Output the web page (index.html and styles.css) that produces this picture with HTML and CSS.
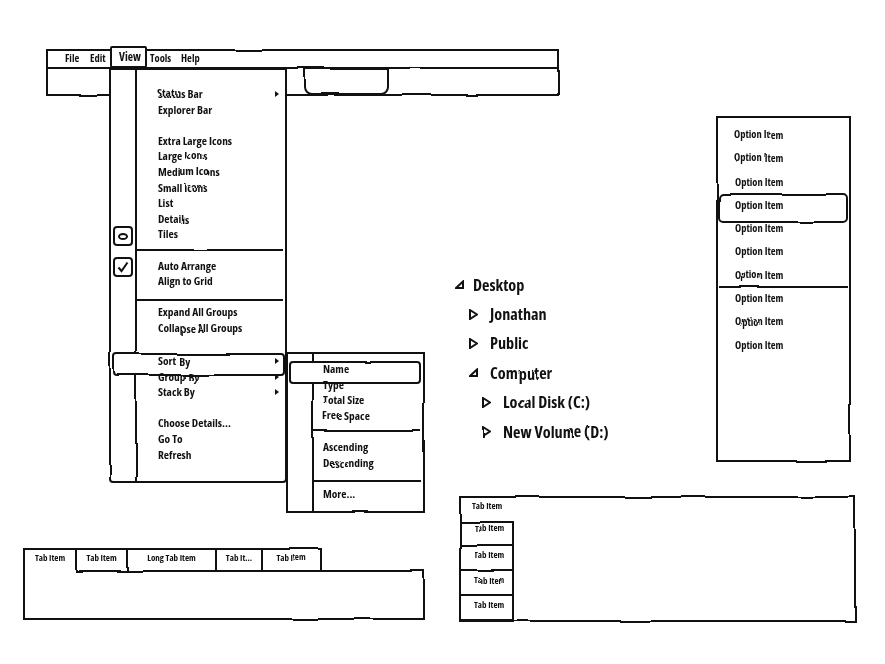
FILE: index.html
```html
<!DOCTYPE html>
<html lang="en">
<head>
    <meta charset="UTF-8">
    <title>wireframe sheet</title>
    <link rel="stylesheet" href="styles.css">
</head>
<body>
    <svg class="defs" width="0" height="0">
        <filter id="rough" x="0" y="0" width="100%" height="100%" color-interpolation-filters="sRGB">
            <feTurbulence type="fractalNoise" baseFrequency="0.018" numOctaves="1" seed="4" result="noise"/>
            <feDisplacementMap in="SourceGraphic" in2="noise" scale="3"/>
            <feGaussianBlur stdDeviation="0.4"/>
        </filter>
    </svg>

    <div class="sheet">
        <!-- window with menu -->
        <div class="window">
            <div class="menubar">
                <span class="bar-item file">File</span>
                <span class="bar-item edit">Edit</span>
                <span class="bar-item view">View</span>
                <span class="bar-item tools">Tools</span>
                <span class="bar-item help">Help</span>
            </div>
            <div class="toolbar">
                <div class="tool-button"></div>
            </div>

            <div class="menu">
                <div class="row arrow">Status Bar</div>
                <div class="row">Explorer Bar</div>
                <div class="row"></div>
                <div class="row">Extra Large Icons</div>
                <div class="row">Large Icons</div>
                <div class="row">Medium Icons</div>
                <div class="row">Small Icons</div>
                <div class="row">List</div>
                <div class="row">Details</div>
                <div class="row">
                    <span class="mark"><span class="dot"></span></span>
                    Tiles
                </div>
                <div class="sep"></div>
                <div class="row">
                    <span class="mark mark-check">
                        <svg width="12" height="12" viewBox="0 0 12 12"><path d="M1.5 6.5 L4.5 10 L10.5 1.5" fill="none" stroke="#111" stroke-width="2"/></svg>
                    </span>
                    Auto Arrange
                </div>
                <div class="row">Align to Grid</div>
                <div class="sep low"></div>
                <div class="row">Expand All Groups</div>
                <div class="row">Collapse All Groups</div>
                <div class="row tall"></div>
                <div class="row arrow current"><span class="label">Sort By</span></div>
                <div class="row arrow">Group By</div>
                <div class="row arrow">Stack By</div>
                <div class="row"></div>
                <div class="row">Choose Details...</div>
                <div class="row">Go To</div>
                <div class="row">Refresh</div>

                <div class="submenu">
                    <div class="row current"><span class="label">Name</span></div>
                    <div class="row">Type</div>
                    <div class="row">Total Size</div>
                    <div class="row">Free Space</div>
                    <div class="sep"></div>
                    <div class="row">Ascending</div>
                    <div class="row">Descending</div>
                    <div class="sep low"></div>
                    <div class="row">More...</div>
                </div>
            </div>
        </div>

        <!-- tree -->
        <div class="tree">
            <div class="node"><svg class="tw" width="9" height="9" viewBox="0 0 9 9"><path d="M1 8 L8 1.5 V8 Z"/></svg>Desktop</div>
            <div class="node lvl1"><svg class="tw" width="9" height="11" viewBox="0 0 9 11"><path d="M1 1 L8 5.5 L1 10 Z"/></svg>Jonathan</div>
            <div class="node lvl1"><svg class="tw" width="9" height="11" viewBox="0 0 9 11"><path d="M1 1 L8 5.5 L1 10 Z"/></svg>Public</div>
            <div class="node lvl1"><svg class="tw" width="9" height="9" viewBox="0 0 9 9"><path d="M1 8 L8 1.5 V8 Z"/></svg>Computer</div>
            <div class="node lvl2"><svg class="tw" width="9" height="11" viewBox="0 0 9 11"><path d="M1 1 L8 5.5 L1 10 Z"/></svg>Local Disk (C:)</div>
            <div class="node lvl2"><svg class="tw" width="9" height="11" viewBox="0 0 9 11"><path d="M1 1 L8 5.5 L1 10 Z"/></svg>New Volume (D:)</div>
        </div>

        <!-- list box -->
        <div class="listbox">
            <div class="option">Option Item</div>
            <div class="option">Option Item</div>
            <div class="option">Option Item</div>
            <div class="option picked">Option Item</div>
            <div class="option">Option Item</div>
            <div class="option">Option Item</div>
            <div class="option">Option Item</div>
            <div class="option ruled">Option Item</div>
            <div class="option">Option Item</div>
            <div class="option">Option Item</div>
        </div>

        <!-- horizontal tabs -->
        <div class="tabs">
            <div class="tab-strip">
                <div class="tab active w52">Tab Item</div>
                <div class="tab w51">Tab Item</div>
                <div class="tab w89">Long Tab Item</div>
                <div class="tab w46">Tab It...</div>
                <div class="tab w61">Tab Item</div>
            </div>
            <div class="tab-panel"></div>
        </div>

        <!-- vertical tabs -->
        <div class="vtabs">
            <div class="vtab first">Tab Item</div>
            <div class="vtab second">Tab Item</div>
            <div class="vtab">Tab Item</div>
            <div class="vtab">Tab Item</div>
            <div class="vtab">Tab Item</div>
        </div>
    </div>
</body>
</html>
```

FILE: styles.css
```css
*{
    box-sizing: border-box;
}
body{
    margin: 0;
    background: #fff;
    overflow: hidden;
}
.defs{
    position: absolute;
}
.sheet{
    position: relative;
    width: 885px;
    height: 664px;
    background: #fff;
    color: #111;
    font-family: "Open Sans", "Open Sans Condensed", "Liberation Sans", sans-serif;
    font-stretch: 75%;
    font-weight: bold;
    font-size: 11.4px;
    filter: url(#rough);
}

/* window + menu */
.window{
    position: absolute;
    left: 46px;
    top: 49px;
    width: 513px;
}
.menubar{
    display: flex;
    align-items: center;
    height: 20px;
    border: 2px solid #111;
    font-size: 10.5px;
    padding: 0 0 3px 17px;
}
.file{
    width: 25px;
}
.edit{
    width: 20px;
}
.view{
    width: 37px;
    height: 22px;
    margin-top: -1px;
    padding: 1px 0 0 7px;
    border: 2px solid #111;
    border-radius: 2px;
    background: #fff;
    font-size: 11.5px;
    position: relative;
    z-index: 2;
}
.tools{
    width: 31px;
    margin-left: 3px;
}
.toolbar{
    height: 28px;
    margin-top: -1px;
    border: 2px solid #111;
    border-top: 0;
    padding-left: 256px;
}
.tool-button{
    width: 85px;
    height: 27px;
    border: 2px solid #111;
    border-radius: 0 0 8px 8px;
}
.menu{
    position: absolute;
    left: 63px;
    top: 19px;
    width: 178px;
    height: 415px;
    border: 2px solid #111;
    border-radius: 0 0 4px 4px;
    background: #fff;
    padding: 16px 0 0 24px;
    background-image: linear-gradient(#111, #111);
    background-repeat: no-repeat;
    background-size: 2px 100%;
    background-position: 24px 0;
}
.row{
    position: relative;
    height: 15.6px;
    line-height: 15.6px;
    padding-left: 23px;
    white-space: nowrap;
}
.row.tall{
    height: 17.6px;
}
.arrow::after{
    content: "";
    position: absolute;
    right: 6px;
    top: 5px;
    border-left: 4px solid #111;
    border-top: 3.5px solid transparent;
    border-bottom: 3.5px solid transparent;
}
.sep{
    display: flex;
    align-items: center;
    height: 15.6px;
    margin-left: 2px;
    margin-right: 2px;
}
.sep::before{
    content: "";
    flex: 1;
    height: 2px;
    background: #111;
}
.sep.low{
    padding-top: 7px;
}
.current::before{
    content: "";
    position: absolute;
    left: -22px;
    right: 0;
    top: 0;
    height: 19px;
    background: #fff;
    border: 2px solid #111;
    border-radius: 4px;
}
.current .label{
    position: relative;
}
.mark{
    position: absolute;
    left: -22px;
    top: 0;
    width: 20px;
    height: 20px;
    display: flex;
    align-items: center;
    justify-content: center;
    border: 2px solid #111;
    border-radius: 4px;
    background: #fff;
}
.mark-check{
    top: -1px;
}
.dot{
    width: 10px;
    height: 7px;
    border: 2px solid #111;
    border-radius: 50%;
}

/* flyout */
.submenu{
    position: absolute;
    left: 175px;
    top: 282px;
    width: 139px;
    height: 161px;
    border: 2px solid #111;
    background: #fff;
    padding: 7px 0 0 24px;
    background-image: linear-gradient(#111, #111);
    background-repeat: no-repeat;
    background-size: 2px 100%;
    background-position: 24px 0;
}
.submenu .row{
    padding-left: 11px;
}
.submenu .current::before{
    left: -23px;
    right: 2px;
}

/* tree */
.tree{
    position: absolute;
    left: 455px;
    top: 270px;
    font-size: 16.2px;
}
.node{
    display: flex;
    align-items: center;
    height: 29.4px;
    white-space: nowrap;
}
.lvl1{
    padding-left: 14px;
}
.lvl2{
    padding-left: 27px;
}
.tw{
    flex: none;
    margin-right: 12px;
}
.tw path{
    fill: none;
    stroke: #111;
    stroke-width: 2;
}
.tree > .node:first-child .tw{
    margin-right: 9px;
}

/* list box */
.listbox{
    position: absolute;
    left: 716px;
    top: 116px;
    width: 135px;
    height: 346px;
    border: 2px solid #111;
    padding-top: 6px;
    font-size: 10.5px;
}
.option{
    position: relative;
    height: 23.3px;
    line-height: 23.3px;
    padding-left: 17px;
}
.picked::before{
    content: "";
    position: absolute;
    left: 0;
    right: 1px;
    top: -1px;
    height: 26px;
    border: 2px solid #111;
    border-radius: 5px;
}
.ruled::before{
    content: "";
    position: absolute;
    left: 1px;
    right: 1px;
    top: -1px;
    height: 2px;
    background: #111;
}

/* tabs */
.tabs{
    position: absolute;
    left: 23px;
    top: 548px;
    width: 402px;
    font-size: 9px;
}
.tab-strip{
    display: flex;
    position: relative;
    z-index: 1;
}
.tab{
    height: 24px;
    margin-right: -2px;
    padding-top: 1px;
    border: 2px solid #111;
    text-align: center;
    background: #fff;
}
.tab.active{
    border-bottom: 0;
}
.w52{ width: 54px; }
.w51{ width: 53px; }
.w89{ width: 91px; }
.w46{ width: 48px; }
.w61{ width: 61px; }
.tab-panel{
    height: 50px;
    margin-top: -2px;
    border: 2px solid #111;
}
.vtabs{
    position: absolute;
    left: 459px;
    top: 496px;
    width: 397px;
    height: 126px;
    border: 2px solid #111;
    font-size: 9px;
}
.vtab{
    width: 55px;
    height: 27px;
    margin-left: -2px;
    padding: 2px 0 0 13px;
    border: 2px solid #111;
    margin-top: -2px;
}
.vtab.first{
    height: 25px;
    margin: 0;
    border: 0;
    padding: 1px 0 0 11px;
}
.vtab.second{
    height: 25px;
    padding-top: 0;
    line-height: 9px;
}
```
